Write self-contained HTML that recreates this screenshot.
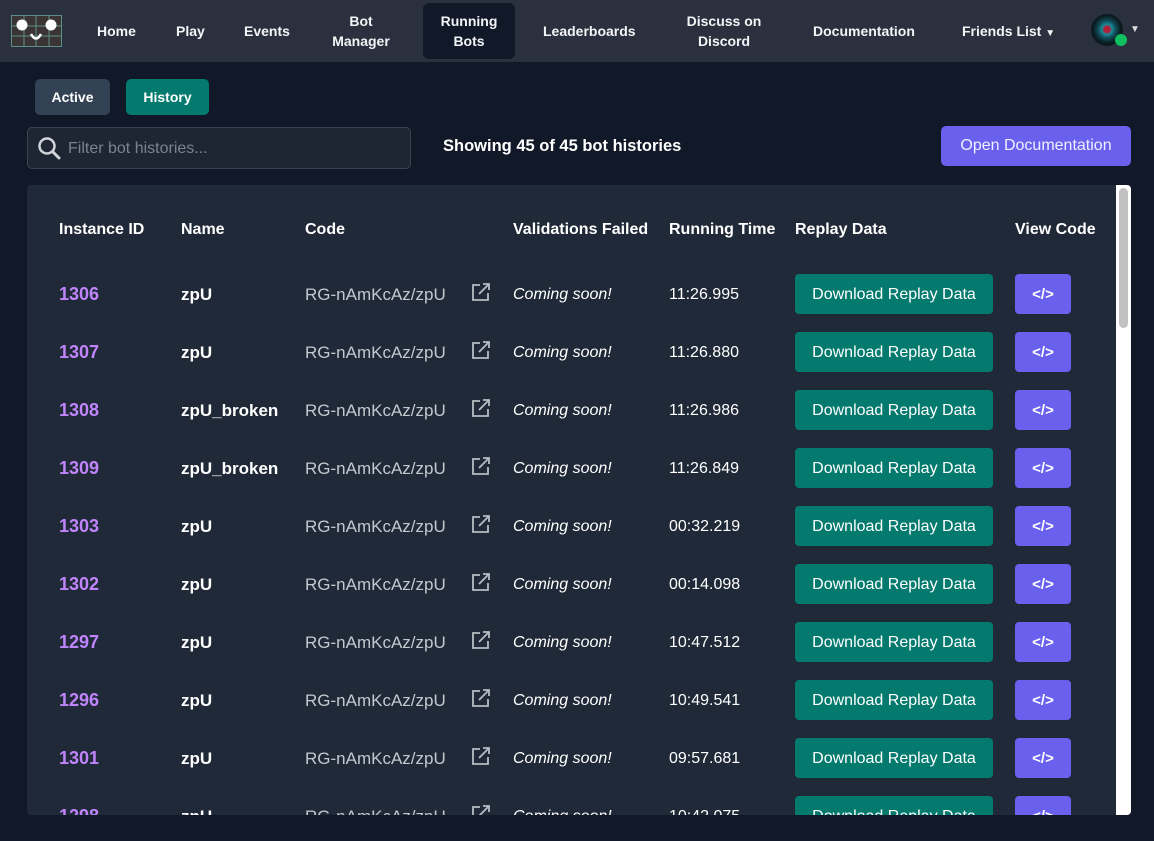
<!DOCTYPE html><html><head><style>
*{box-sizing:border-box;margin:0;padding:0}
body{width:1154px;height:841px;overflow:hidden;background:#111827;font-family:"Liberation Sans",sans-serif;color:#fff;position:relative}
.nav{position:absolute;left:0;top:0;width:1154px;height:62px;background:#2a303e}
.ni{position:absolute;font-size:14px;font-weight:bold;text-align:center;color:#f3f4f6;line-height:20px}
.a{position:absolute}
.btn{position:absolute;border-radius:5px;font-weight:bold;font-size:14px;display:flex;align-items:center;justify-content:center}
.th{position:absolute;top:221px;font-size:16px;font-weight:bold}
.row{position:absolute;left:0;width:1154px;height:58px}
.row div{position:absolute}
</style></head><body>
<div class="nav">
<svg class="a" style="left:11px;top:15px" width="51" height="32" viewBox="0 0 51 32"><rect x="0.5" y="0.5" width="50" height="31" fill="#3a3434" stroke="#5e8f86"/><g stroke="#5e8f86" stroke-width="1"><line x1="13" y1="0" x2="13" y2="32"/><line x1="25" y1="0" x2="25" y2="32"/><line x1="38" y1="0" x2="38" y2="32"/><line x1="0" y1="11" x2="51" y2="11"/><line x1="0" y1="21" x2="51" y2="21"/></g><circle cx="11" cy="10" r="5.5" fill="#fff"/><circle cx="40" cy="10" r="5.5" fill="#fff"/><path d="M20 19 Q25 28 30 19" stroke="#fff" stroke-width="2.5" fill="none"/></svg>
<div class="ni" style="left:97px;top:21px">Home</div>
<div class="ni" style="left:176px;top:21px">Play</div>
<div class="ni" style="left:244px;top:21px">Events</div>
<div class="ni" style="left:330px;top:11px;width:62px">Bot<br>Manager</div>
<div class="a" style="left:423px;top:3px;width:92px;height:56px;background:#111827;border-radius:6px"></div>
<div class="ni" style="left:423px;top:11px;width:92px">Running<br>Bots</div>
<div class="ni" style="left:543px;top:21px">Leaderboards</div>
<div class="ni" style="left:674px;top:11px;width:100px">Discuss on<br>Discord</div>
<div class="ni" style="left:813px;top:21px">Documentation</div>
<div class="ni" style="left:962px;top:21px">Friends List <span style="font-size:10px">▼</span></div>
<div class="a" style="left:1091px;top:14px;width:32px;height:32px;border-radius:50%;background:radial-gradient(circle at 50% 48%,#b0203a 0 3px,#1a8a9a 5px,#104a55 9px,#0a1a1f 14px)"></div>
<div class="a" style="left:1115px;top:34px;width:12px;height:12px;border-radius:50%;background:#10c060"></div>
<div class="a" style="left:1130px;top:24px;font-size:10px;color:#ddd">▼</div>
</div>
<div class="btn" style="left:35px;top:79px;width:75px;height:36px;background:#334155">Active</div>
<div class="btn" style="left:126px;top:79px;width:83px;height:36px;background:#047a6e">History</div>
<div class="a" style="left:27px;top:127px;width:384px;height:42px;border:1px solid #3b4352;border-radius:5px;background:#1f2633"></div>
<svg class="a" style="left:37px;top:136px" width="25" height="25" viewBox="0 0 25 25"><circle cx="10" cy="10" r="7.5" stroke="#d1d5db" stroke-width="2.5" fill="none"/><line x1="15.5" y1="15.5" x2="22" y2="22" stroke="#d1d5db" stroke-width="3" stroke-linecap="round"/></svg>
<div class="a" style="left:68px;top:140px;font-size:16px;color:#7b8291">Filter bot histories...</div>
<div class="a" style="left:443px;top:137px;font-size:16.5px;font-weight:bold">Showing 45 of 45 bot histories</div>
<div class="btn" style="left:941px;top:126px;width:190px;height:40px;background:#6961ee;font-size:16px;font-weight:normal;color:#f0f0ff">Open Documentation</div>
<div class="a" style="left:27px;top:185px;width:1104px;height:630px;background:#1f2937;border-radius:4px;overflow:hidden">
<div class="a" style="left:1089px;top:0;width:15px;height:630px;background:#fff"></div>
<div class="a" style="left:1092px;top:3px;width:9px;height:140px;background:#c1c1c1;border-radius:5px"></div>
<div style="position:absolute;left:-27px;top:-185px;width:1154px;height:841px">
<div class="th" style="left:59px">Instance ID</div><div class="th" style="left:181px">Name</div><div class="th" style="left:305px">Code</div><div class="th" style="left:513px">Validations Failed</div><div class="th" style="left:669px">Running Time</div><div class="th" style="left:795px">Replay Data</div><div class="th" style="left:1015px">View Code</div>
<div id="rows"></div>
</div></div>
<script>
var d=[["1306","zpU","11:26.995"],["1307","zpU","11:26.880"],["1308","zpU_broken","11:26.986"],["1309","zpU_broken","11:26.849"],["1303","zpU","00:32.219"],["1302","zpU","00:14.098"],["1297","zpU","10:47.512"],["1296","zpU","10:49.541"],["1301","zpU","09:57.681"],["1298","zpU","10:42.075"]];
var h="";d.forEach(function(r,i){var y=274+58*i;
h+='<div class="row" style="top:'+y+'px">'+
'<div style="left:59px;top:10px;font-size:18px;font-weight:bold;color:#c084fc">'+r[0]+'</div>'+
'<div style="left:181px;top:11px;font-size:17px;font-weight:bold">'+r[1]+'</div>'+
'<div style="left:305px;top:11px;font-size:17px;color:#c4c8cf">RG-nAmKcAz/zpU</div>'+
'<div style="left:470px;top:8px"><svg width="21" height="21" viewBox="0 0 21 21" fill="none" stroke="#b8bcc4" stroke-width="1.8"><path d="M10 3H3v15h15v-7"/><path d="M9 12L19 2M13 2h6v6"/></svg></div>'+
'<div style="left:513px;top:12px;font-size:16px;font-style:italic">Coming soon!</div>'+
'<div style="left:669px;top:12px;font-size:16px">'+r[2]+'</div>'+
'<div style="left:795px;top:0;width:198px;height:40px;background:#047a6e;border-radius:4px;font-size:16px;display:flex;align-items:center;justify-content:center;padding-top:1px">Download Replay Data</div>'+
'<div style="left:1015px;top:0;width:56px;height:40px;background:#6961ee;border-radius:4px;font-size:15px;font-weight:bold;display:flex;align-items:center;justify-content:center">&lt;/&gt;</div></div>';});
document.getElementById("rows").innerHTML=h;
</script>
</body></html>
